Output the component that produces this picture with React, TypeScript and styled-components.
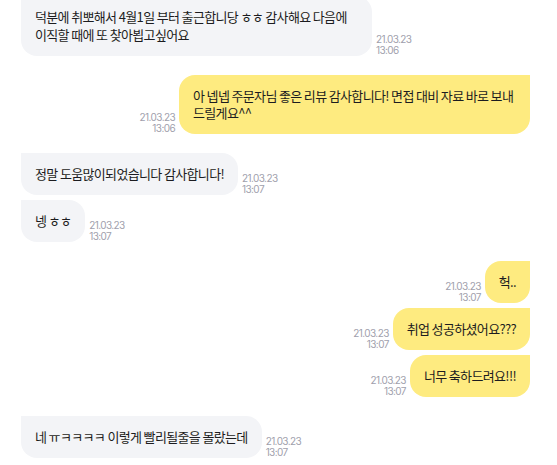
import React from "react";
import styled, { createGlobalStyle } from "styled-components";

const Global = createGlobalStyle`
  html, body { margin: 0; padding: 0; background: #ffffff; }
  body { font-family: Inter, "Noto Sans CJK KR", sans-serif; overflow: hidden; }
`;

const Chat = styled.div`
  display: flex;
  flex-direction: column;
  padding: 0 27px 0 21px;
  margin-top: -4px;
`;

const Row = styled.div<{ $mine: boolean; $gap: number }>`
  display: flex;
  flex-direction: ${(p) => (p.$mine ? "row-reverse" : "row")};
  align-items: flex-end;
  gap: 4px;
  margin-top: ${(p) => p.$gap}px;
`;

const Bubble = styled.div<{ $mine: boolean }>`
  max-width: 351px;
  box-sizing: border-box;
  padding: 12.25px 14px;
  font-family: "Noto Sans CJK KR", sans-serif;
  font-size: 13px;
  line-height: 17.5px;
  letter-spacing: -0.65px;
  color: #1c1c20;
  background: ${(p) => (p.$mine ? "#feeb80" : "#f3f4f7")};
  border-radius: ${(p) => (p.$mine ? "16px 0 16px 16px" : "0 16px 16px 16px")};
  word-break: break-all;
`;

const Time = styled.div<{ $mine: boolean }>`
  display: flex;
  flex-direction: column;
  align-items: ${(p) => (p.$mine ? "flex-end" : "flex-start")};
  font-family: Inter, sans-serif;
  font-size: 10px;
  line-height: 11px;
  letter-spacing: -0.6px;
  color: #a0a0ac;
  padding-bottom: 0;
  flex-shrink: 0;
`;

type Msg = { mine: boolean; text: string; date: string; time: string; gap: number };

const messages: Msg[] = [
  { mine: false, text: "덕분에 취뽀해서 4월1일 부터 출근합니당 ㅎㅎ 감사해요 다음에 이직할 때에 또 찾아뵙고싶어요", date: "21.03.23", time: "13:06", gap: 0 },
  { mine: true, text: "아 넵넵 주문자님 좋은 리뷰 감사합니다! 면접 대비 자료 바로 보내드릴게요^^", date: "21.03.23", time: "13:06", gap: 19 },
  { mine: false, text: "정말 도움많이되었습니다 감사합니다!", date: "21.03.23", time: "13:07", gap: 19 },
  { mine: false, text: "넹 ㅎㅎ", date: "21.03.23", time: "13:07", gap: 5 },
  { mine: true, text: "헉..", date: "21.03.23", time: "13:07", gap: 19 },
  { mine: true, text: "취업 성공하셨어요???", date: "21.03.23", time: "13:07", gap: 5 },
  { mine: true, text: "너무 축하드려요!!!", date: "21.03.23", time: "13:07", gap: 5 },
  { mine: false, text: "네 ㅠㅋㅋㅋㅋ 이렇게 빨리될줄을 몰랐는데", date: "21.03.23", time: "13:07", gap: 19 },
];

export default function App() {
  return (
    <>
      <Global />
      <Chat>
        {messages.map((m, i) => (
          <Row key={i} $mine={m.mine} $gap={m.gap}>
            <Bubble $mine={m.mine}>{m.text}</Bubble>
            <Time $mine={m.mine}>
              <span>{m.date}</span>
              <span>{m.time}</span>
            </Time>
          </Row>
        ))}
      </Chat>
    </>
  );
}
